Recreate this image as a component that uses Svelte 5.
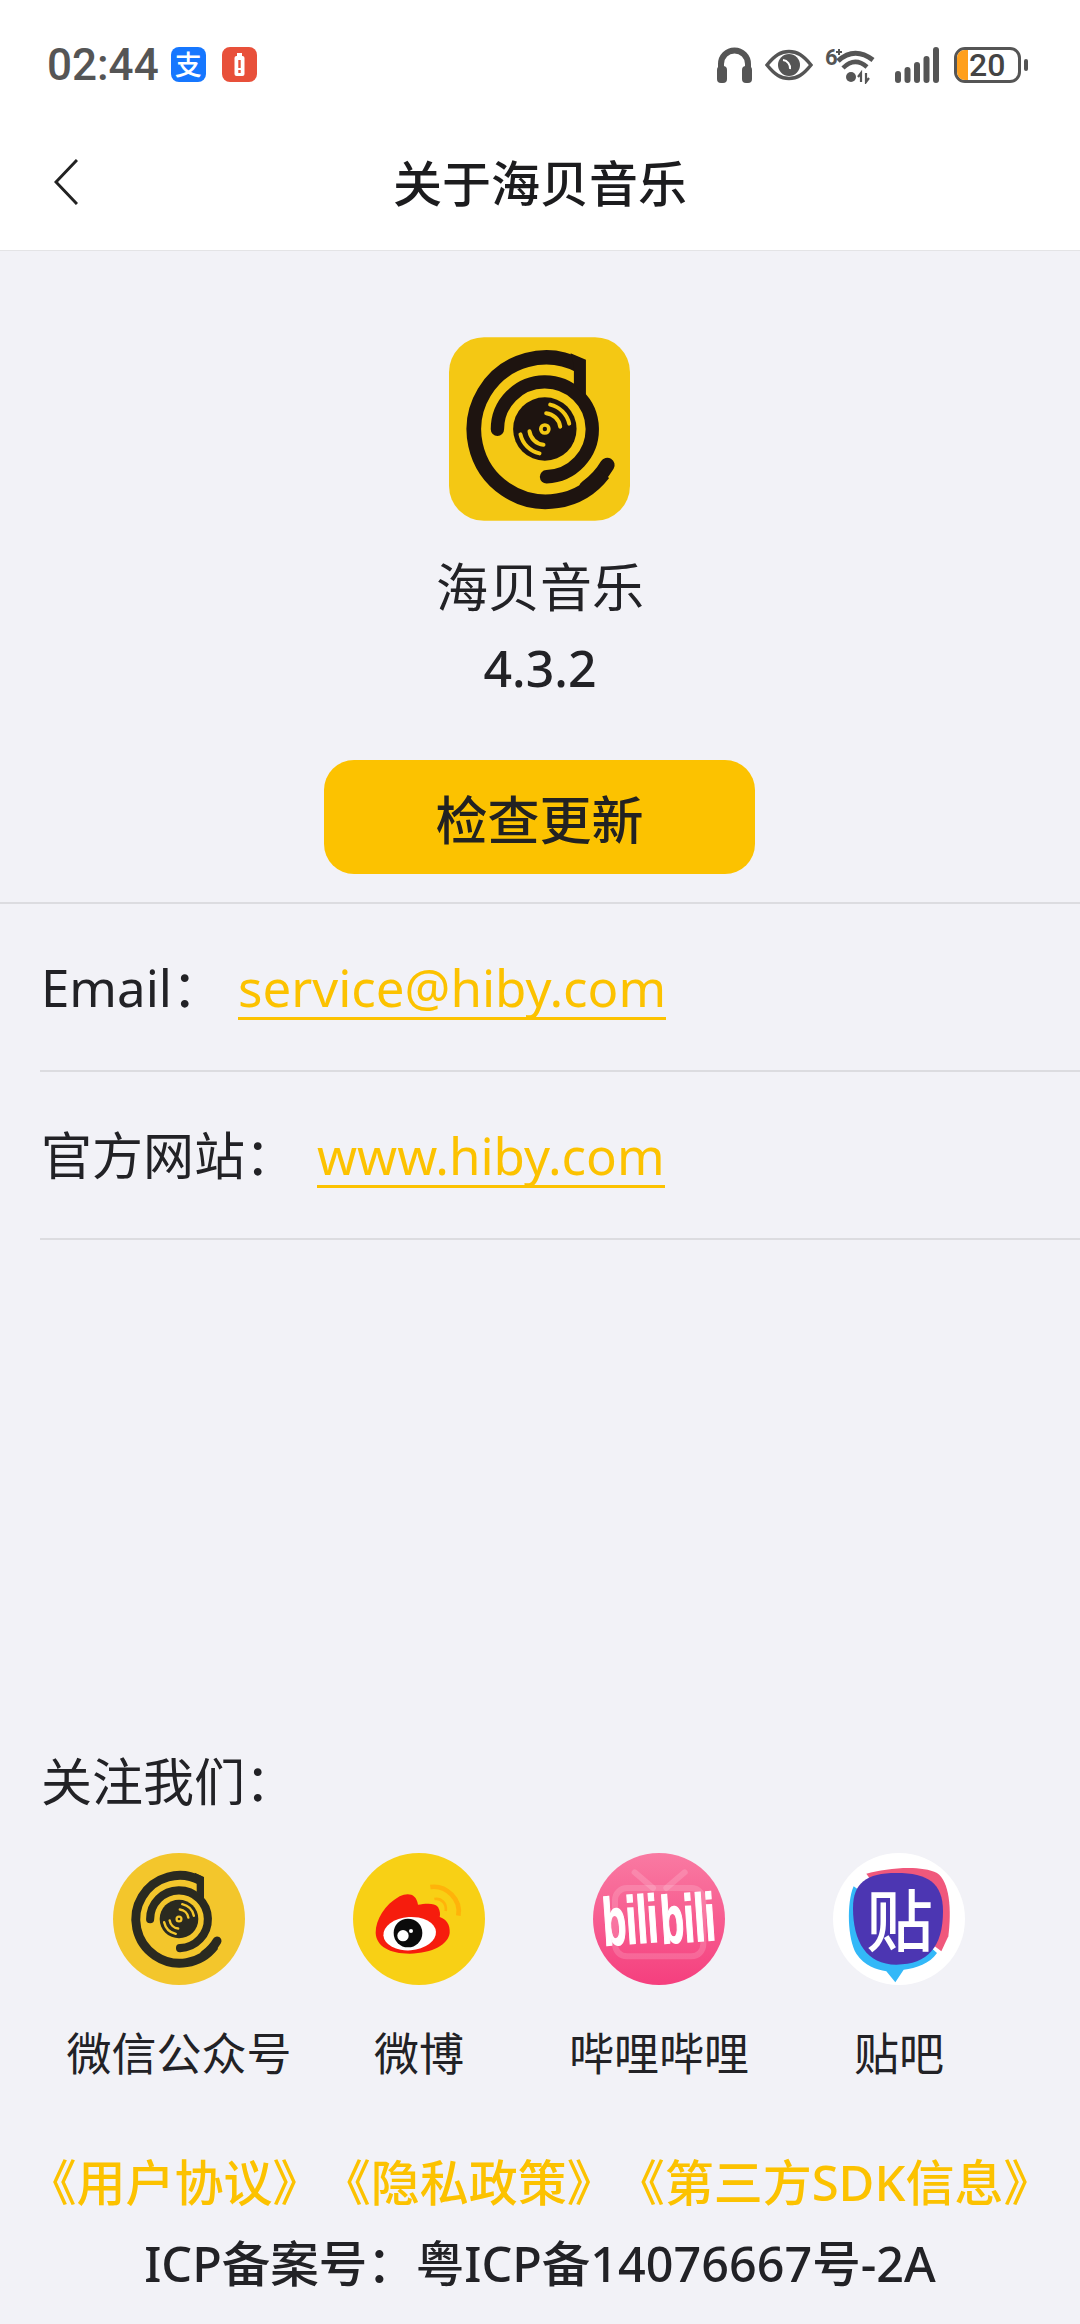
<script>
	const socials = [
		{ id: 'wechat', label: '微信公众号' },
		{ id: 'weibo', label: '微博' },
		{ id: 'bili', label: '哔哩哔哩' },
		{ id: 'tieba', label: '贴吧' }
	];
	const legal = ['《用户协议》', '《隐私政策》', '《第三方SDK信息》'];
</script>

{#snippet disc(ink, fill)}
	<!-- drawn around the centre of the record, 435/356 -->
	<g fill="none" stroke={ink} stroke-linecap="round">
		<path d="M622 465A216 216 0 0 1 560 532" stroke-width="44" />
		<path d="M293 358A142 142 0 1 1 440 500" stroke-width="40" />
	</g>
	<path d="M610 490A216 216 0 1 1 540 168" fill="none" stroke={ink} stroke-width="44" />
	<path d="M512 130L558 150V260L522 224V165Z" fill={ink} />
	<circle cx="435" cy="357" r="95" fill={ink} />
	<g fill="none" stroke={fill} stroke-width="12" stroke-linecap="round">
		<path d="M451 284A75 75 0 0 1 508 341" />
		<path d="M439 310A47 47 0 0 1 481 350" />
		<path d="M419 430A75 75 0 0 1 362 373" />
		<path d="M431 404A47 47 0 0 1 389 364" />
	</g>
	<circle cx="435" cy="357" r="12" fill={ink} stroke={fill} stroke-width="11" />
{/snippet}

<div class="page">
	<header class="status">
		<div class="status-left">
			<span class="time">02:44</span>
			<span class="app-badge alipay">支</span>
			<span class="app-badge power">
				<svg width="35" height="35" viewBox="0 0 35 35">
					<rect x="15" y="6" width="5" height="4" fill="#fff" />
					<rect x="12.500" y="9" width="10" height="20" rx="2" fill="#fff" />
					<path d="M17.500 13v8M17.500 23v3" stroke="#e8503a" stroke-width="2.400" />
				</svg>
			</span>
		</div>
		<div class="status-right">
			<svg class="st-phones" width="35" height="36" viewBox="0 0 35 36">
				<path d="M4 24V17a13.500 13.500 0 0 1 27 0v7" fill="none" stroke="#555" stroke-width="6" />
				<rect x="0" y="19" width="10" height="17" rx="4" fill="#555" />
				<rect x="25" y="19" width="10" height="17" rx="4" fill="#555" />
			</svg>
			<svg class="st-eye" width="48" height="32" viewBox="0 0 48 32">
				<path d="M2 16C10 6 16 2.500 24 2.500S38 6 46 16C38 26 32 29.500 24 29.500S10 26 2 16Z" fill="none" stroke="#555" stroke-width="3.500" />
				<circle cx="24" cy="16" r="11" fill="#555" />
				<path d="M18 11a8 8 0 0 1 7 9" fill="none" stroke="#fff" stroke-width="2" />
			</svg>
			<svg class="st-wifi" width="50" height="38" viewBox="0 0 50 38">
				<text x="0" y="19" class="wifi-six">6</text>
				<path d="M11 6h6M14 3v6" stroke="#555" stroke-width="2" />
				<path d="M13 15C24 5 36 5 48 14" fill="none" stroke="#555" stroke-width="5" />
				<path d="M18 22C26 14 34 14 42 21" fill="none" stroke="#555" stroke-width="4.500" />
				<circle cx="26" cy="31" r="5" fill="#555" />
				<path d="M36 36v-9l-3 4M41 27v9l3-4" fill="none" stroke="#555" stroke-width="2.200" />
			</svg>
			<svg class="st-signal" width="44" height="36" viewBox="0 0 44 36" fill="#555">
				<rect x="0" y="24" width="6" height="12" rx="3" />
				<rect x="9.500" y="20" width="6" height="16" rx="3" />
				<rect x="19" y="15" width="6" height="21" rx="3" />
				<rect x="28.500" y="9" width="6" height="27" rx="3" />
				<rect x="38" y="0" width="6" height="36" rx="3" />
			</svg>
			<span class="battery"><span class="battery-fill"></span><span class="battery-num">20</span></span>
			<span class="battery-nub"></span>
		</div>
	</header>

	<nav class="bar">
		<svg class="back" width="24" height="46" viewBox="0 0 24 46">
			<path d="M23 1L2 23L23 45" fill="none" stroke="#222" stroke-width="3" />
		</svg>
		<h1>关于海贝音乐</h1>
	</nav>

	<section class="about">
		<svg class="app-icon" width="181" height="184" viewBox="148 82 542 550">
			<rect x="148" y="82" width="542" height="550" rx="105" fill="#f4c814" />
			{@render disc('#1e1410', '#f4c814')}
		</svg>
		<div class="app-name">海贝音乐</div>
		<div class="app-version">4.3.2</div>
		<button type="button" class="update">检查更新</button>
	</section>

	<div class="contact">
		<div class="row"><span class="key">Email：</span><span class="link mail">service@hiby.com</span></div>
		<div class="row"><span class="key">官方网站：</span><span class="link site">www.hiby.com</span></div>
	</div>

	<footer class="foot">
		<div class="follow">关注我们：</div>
		<div class="socials">
			{#each socials as s}
				<div class="social">
					<svg width="132" height="132" viewBox="0 0 396 396">
						{#if s.id === 'wechat'}
							<circle cx="198" cy="198" r="198" fill="#f3c62c" />
							<g transform="translate(198 198) scale(.61) translate(-435 -357)">
								{@render disc('#2a2a20', '#f3c62c')}
							</g>
						{:else if s.id === 'weibo'}
							<circle cx="198" cy="198" r="198" fill="#f8d015" />
							<g transform="translate(-790 -70)">
								<path d="M858 310C858 270 885 225 930 200C955 188 980 192 985 225C1005 222 1035 218 1045 232C1052 245 1052 255 1050 262C1070 268 1082 285 1080 310C1075 345 1030 370 960 372C900 372 860 350 858 310Z" fill="#f61c0d" />
								<ellipse cx="960" cy="312" rx="79" ry="50" transform="rotate(-4 960 312)" fill="#fff" />
								<circle cx="955" cy="310" r="43" fill="#0b0b0b" />
								<circle cx="940" cy="318" r="17" fill="#fff" />
								<circle cx="964" cy="304" r="6" fill="#fff" />
								<path d="M1022 172C1070 165 1115 210 1106 258" fill="none" stroke="#ffb30a" stroke-width="14" />
								<path d="M1034 208C1055 204 1072 222 1068 244" fill="none" stroke="#ffb30a" stroke-width="8" />
							</g>
						{:else if s.id === 'bili'}
							<defs>
								<linearGradient id="biliFill" x1="0" y1="0" x2="0" y2="1">
									<stop offset="0" stop-color="#f97aa2" />
									<stop offset="1" stop-color="#f53f7e" />
								</linearGradient>
							</defs>
							<circle cx="198" cy="198" r="198" fill="url(#biliFill)" />
							<g fill="none" stroke="#ffffff" stroke-opacity=".16" stroke-width="18">
								<rect x="66" y="105" width="265" height="205" rx="36" />
								<path d="M125 58L180 105M275 58L220 105" stroke-linecap="round" />
							</g>
							<text class="bili-word" x="30" y="272" textLength="166" lengthAdjust="spacingAndGlyphs" transform="rotate(-4 110 220)">bili</text>
							<text class="bili-word" x="204" y="266" textLength="164" lengthAdjust="spacingAndGlyphs" transform="rotate(-4 285 220)">bili</text>
						{:else}
							<circle cx="198" cy="198" r="198" fill="#fff" />
							<path d="M100 62C160 46 260 34 312 60C350 85 356 170 346 250L325 295L200 200Z" fill="#f0587c" />
							<path d="M62 100C40 150 44 260 70 302C95 340 130 348 160 355L187 388L212 350C250 346 290 332 312 300L200 200Z" fill="#33b8f8" />
							<path d="M60 165C60 90 100 60 190 60C285 60 330 90 330 175C330 280 285 335 190 335C100 335 60 265 60 165Z" fill="#4c36b2" />
							<text class="tieba-word" x="200" y="280">贴</text>
						{/if}
					</svg>
					<span>{s.label}</span>
				</div>
			{/each}
		</div>
		<div class="legal">
			{#each legal as item}
				<span>{item}</span>
			{/each}
		</div>
		<div class="icp">ICP备案号：粤ICP备14076667号-2A</div>
	</footer>
</div>

<style>
	:global(body) {
		margin: 0;
		background: #f2f2f7;
	}

	.page {
		display: flex;
		flex-direction: column;
		height: 2324px;
		overflow: hidden;
		color: #222226;
		font-family: "Noto Sans", "Noto Sans CJK SC", sans-serif;
		font-weight: 500;
		background: #f2f2f7;
	}

	.status {
		display: flex;
		align-items: center;
		justify-content: space-between;
		box-sizing: border-box;
		height: 125px;
		padding: 4px 52px 0 47px;
		background: #fff;
	}

	.status-left,
	.status-right {
		display: flex;
		align-items: center;
	}

	.time {
		margin-right: 12px;
		color: #555;
		font: 500 44px/50px Roboto, sans-serif;
	}

	.app-badge {
		display: flex;
		align-items: center;
		justify-content: center;
		width: 35px;
		height: 35px;
		margin-right: 16px;
		border-radius: 8px;
	}

	.alipay {
		color: #fff;
		font-size: 27px;
		line-height: 35px;
		background: #1677ff;
	}

	.power {
		background: #e8503a;
	}

	.st-eye {
		margin-left: 13px;
	}

	.st-wifi {
		margin-left: 12px;
	}

	.st-signal {
		margin-left: 20px;
	}

	.wifi-six {
		fill: #555;
		font: 700 22px Roboto, sans-serif;
	}

	.battery {
		position: relative;
		display: flex;
		box-sizing: border-box;
		width: 67px;
		height: 36px;
		margin-left: 15px;
		overflow: hidden;
		border: 3px solid #555;
		border-radius: 11px;
	}

	.battery-fill {
		width: 11px;
		background: #ff9f1c;
	}

	.battery-num {
		margin-left: 1px;
		color: #444;
		font: 500 32px/30px Roboto, sans-serif;
	}

	.battery-nub {
		width: 4px;
		height: 12px;
		margin-left: 3px;
		border-radius: 2px;
		background: #555;
	}

	.bar {
		position: relative;
		display: flex;
		align-items: center;
		justify-content: center;
		box-sizing: border-box;
		height: 126px;
		padding-bottom: 10px;
		background: #fff;
		border-bottom: 1px solid #e4e4e6;
	}

	.back {
		position: absolute;
		top: 34px;
		left: 54px;
	}

	h1 {
		margin: 0;
		color: #1c1c1e;
		font-size: 49px;
		font-weight: 500;
		line-height: 60px;
	}

	.about {
		display: flex;
		flex-direction: column;
		align-items: center;
		box-sizing: border-box;
		height: 653px;
		padding-top: 86px;
		border-bottom: 2px solid #dcdce0;
	}

	.app-icon {
		margin-right: 1px;
	}

	.app-name {
		margin-top: 36px;
		font-size: 52px;
		font-weight: 400;
		line-height: 60px;
	}

	.app-version {
		margin-top: 21px;
		font-size: 50px;
		line-height: 60px;
	}

	.update {
		width: 431px;
		height: 114px;
		margin-top: 62px;
		margin-right: 1px;
		padding: 0;
		color: #222;
		font: inherit;
		font-size: 52px;
		background: #fcc200;
		border: 0;
		border-radius: 30px;
	}

	.contact {
		padding-left: 40px;
	}

	.row {
		display: flex;
		align-items: center;
		box-sizing: border-box;
		height: 168px;
		border-bottom: 2px solid #dcdce0;
	}

	.key {
		padding-left: 1px;
		font-size: 51px;
		font-weight: 400;
		line-height: 60px;
	}

	.link {
		margin-top: 2px;
		color: #fcc200;
		font-size: 51px;
		font-weight: 400;
		line-height: 60px;
		border-bottom: 3px solid #fcc200;
	}

	.mail {
		margin-left: 15px;
	}

	.site {
		margin-left: 21px;
	}

	.foot {
		margin-top: auto;
		padding-bottom: 31px;
	}

	.follow {
		padding-left: 41px;
		font-size: 51px;
		font-weight: 400;
		line-height: 60px;
	}

	.socials {
		display: grid;
		grid-template-columns: repeat(4, 240px);
		margin-top: 42px;
		padding-left: 59px;
	}

	.social {
		display: flex;
		flex-direction: column;
		align-items: center;
		font-size: 45px;
		font-weight: 400;
		line-height: 56px;
	}

	.social svg {
		display: block;
		margin-bottom: 41px;
		overflow: visible;
	}

	.bili-word {
		fill: #fff;
		stroke: #fff;
		stroke-width: 5px;
		font: 700 200px "Liberation Sans", sans-serif;
	}

	.tieba-word {
		fill: #fff;
		font: 500 200px "Noto Sans CJK SC", sans-serif;
		text-anchor: middle;
	}

	.legal {
		display: flex;
		justify-content: center;
		margin-top: 70px;
		color: #fcc200;
		font-size: 49px;
		line-height: 60px;
	}

	.icp {
		margin-top: 21px;
		font-size: 48.500px;
		line-height: 60px;
		text-align: center;
	}
</style>
